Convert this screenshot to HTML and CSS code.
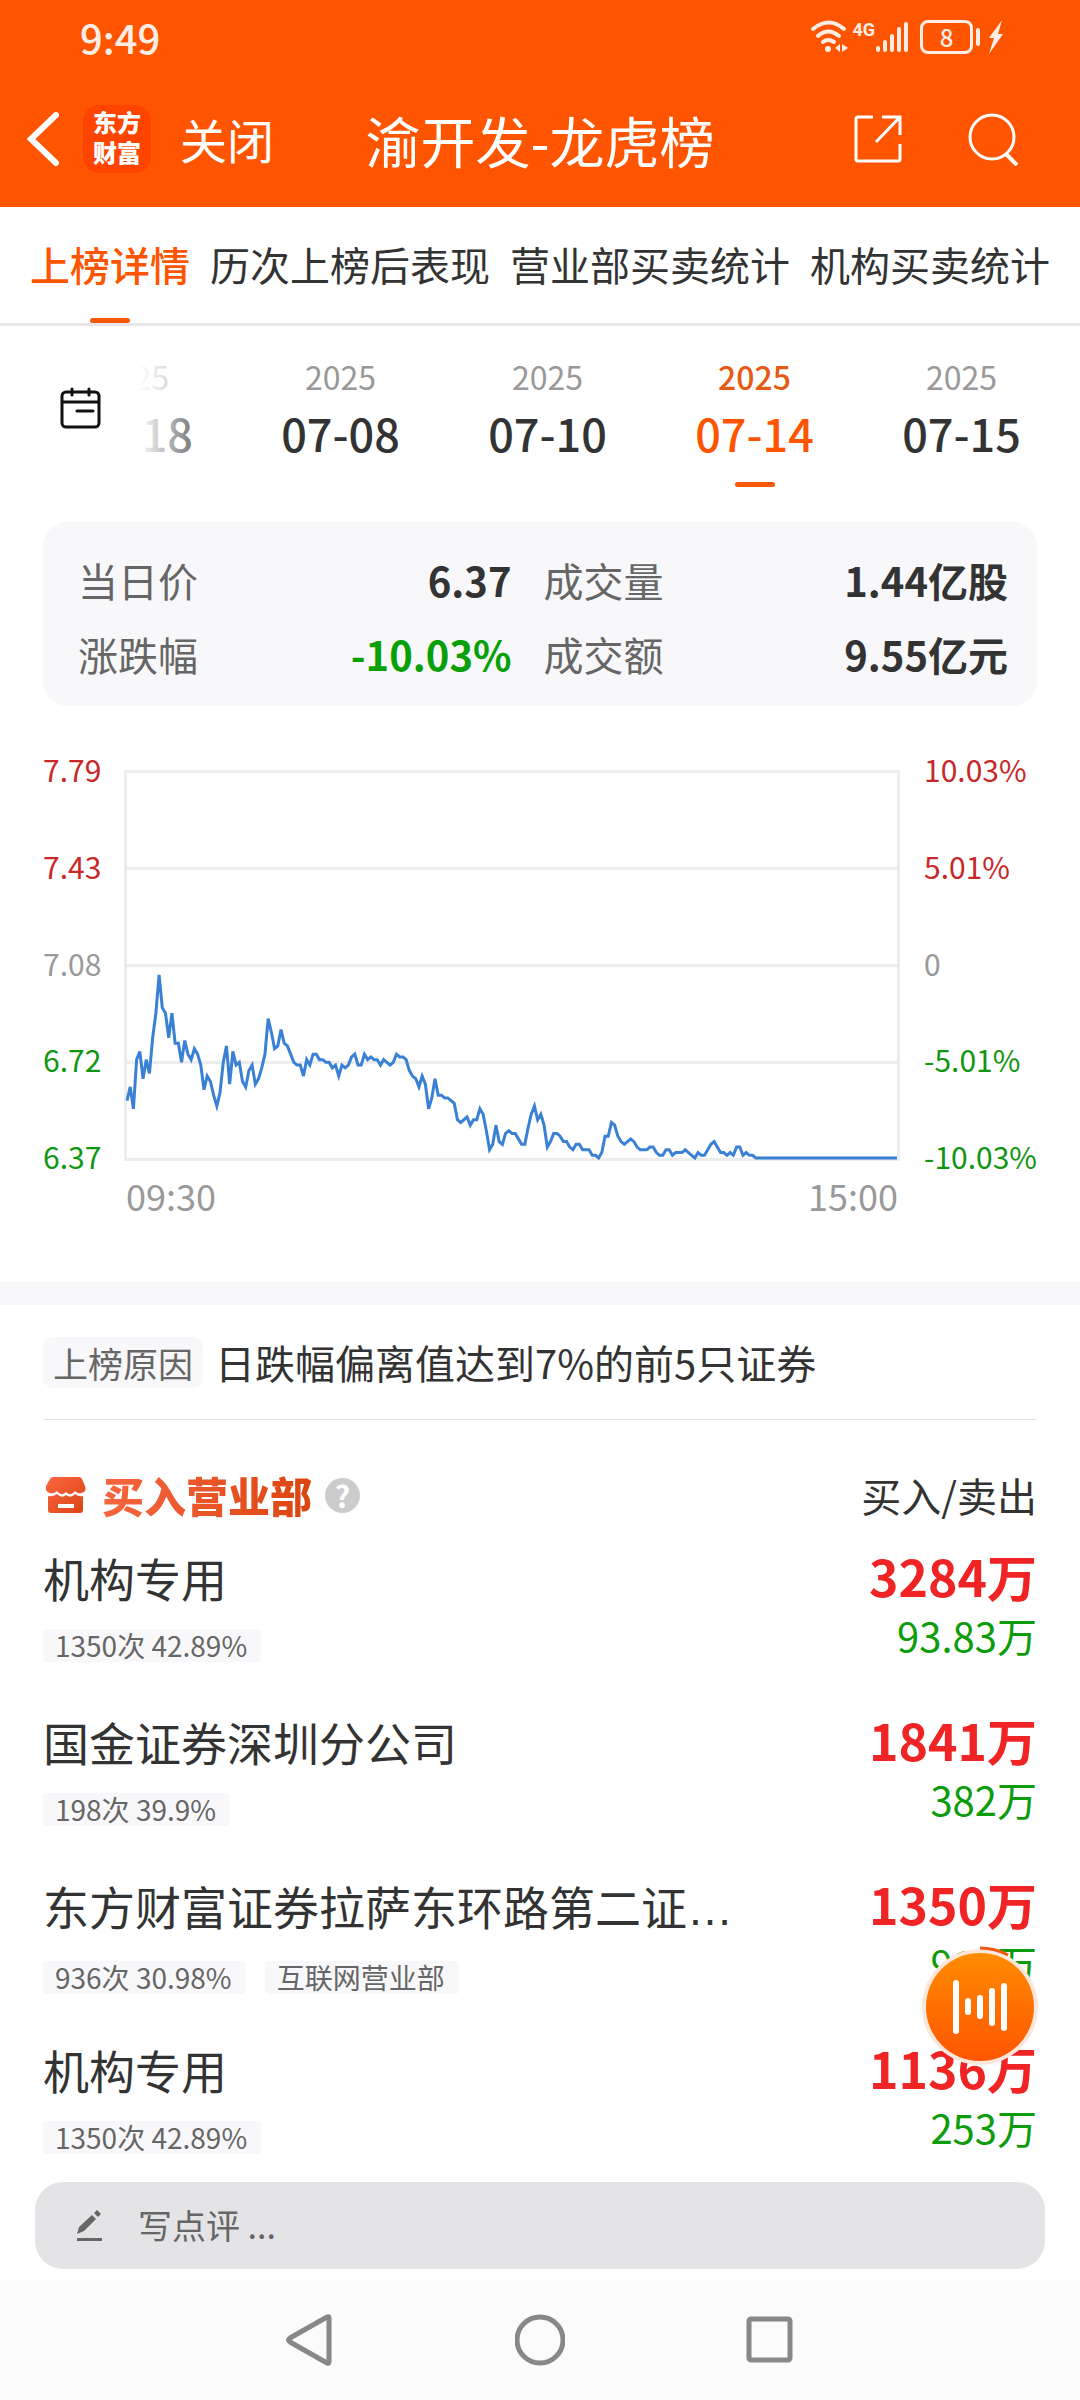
FILE: index.html
```html
<!DOCTYPE html>
<html lang="zh-CN">
<head>
<meta charset="utf-8">
<meta name="viewport" content="width=device-width, initial-scale=1">
<title>渝开发-龙虎榜</title>
<link rel="stylesheet" href="styles.css">
</head>
<body>
<div class="app">
  <header class="top">
    <div class="status">
      <time class="status-time">9:49</time>
      <div class="status-icons">
        <svg width="40" height="34" viewBox="0 0 40 34" fill="none" stroke="currentColor" stroke-width="4" stroke-linecap="round" aria-hidden="true">
          <path d="M3 9Q19 -4 34 9"/><path d="M8 16Q18 7 29 16"/><path d="M13 22Q18 18 24 22"/>
          <circle cx="18" cy="29" r="3" fill="currentColor" stroke="none"/>
          <path d="M30 24v8l-5-4zM32 24v8l6-4z" fill="currentColor" stroke="none"/>
        </svg>
        <span class="net">4G</span>
        <svg width="34" height="34" viewBox="0 0 34 34" fill="none" stroke="currentColor" stroke-width="4" stroke-linecap="round" aria-hidden="true">
          <path d="M3 28v2M10 22v8M17 16v14M24 9v21M31 4v26"/>
        </svg>
        <span class="battery">8</span>
        <svg width="16" height="34" viewBox="0 0 16 34" fill="currentColor" aria-hidden="true"><path d="M14 0L1 18h5L1 34 15 14H10z"/></svg>
      </div>
    </div>
    <div class="titlebar">
      <button class="icon-btn" aria-label="返回">
        <svg width="34" height="56" viewBox="0 0 34 56" fill="none" stroke="currentColor" stroke-width="6" stroke-linecap="round"><path d="M31 4L6 28l25 24"/></svg>
      </button>
      <span class="logo">东方<br>财富</span>
      <button class="close">关闭</button>
      <h1 class="title">渝开发-龙虎榜</h1>
      <button class="icon-btn share" aria-label="分享">
        <svg width="48" height="48" viewBox="0 0 48 48" fill="none" stroke="currentColor" stroke-width="3"><path d="M19 2H4Q2 2 2 4V44Q2 46 4 46H44Q46 46 46 44V29M28 2H46V20M45 3L22 27"/></svg>
      </button>
      <button class="icon-btn search" aria-label="搜索">
        <svg width="52" height="54" viewBox="0 0 52 54" fill="none" stroke="currentColor" stroke-width="3"><circle cx="24" cy="25" r="22"/><path d="M38 42L49 53" stroke-width="4"/></svg>
      </button>
    </div>
  </header>

  <nav class="tabs">
    <a class="tab active" href="#detail">上榜详情</a>
    <a class="tab" href="#history">历次上榜后表现</a>
    <a class="tab" href="#branch">营业部买卖统计</a>
    <a class="tab" href="#org">机构买卖统计</a>
  </nav>

  <main>
    <section class="dates">
      <button class="calendar" aria-label="选择日期">
        <svg width="42" height="42" viewBox="0 0 42 42" fill="none" stroke="currentColor" stroke-width="3" stroke-linecap="round"><rect x="2" y="5" width="37" height="35" rx="4"/><path d="M3 15H38M12 2V8M29 2V8M17 24H33"/></svg>
      </button>
      <div class="date-list">
        <button class="date"><small>2025</small>06-18</button>
        <button class="date"><small>2025</small>07-08</button>
        <button class="date"><small>2025</small>07-10</button>
        <button class="date active"><small>2025</small>07-14</button>
        <button class="date"><small>2025</small>07-15</button>
      </div>
    </section>

    <dl class="summary">
      <div><dt>当日价</dt><dd>6.37</dd></div>
      <div><dt>成交量</dt><dd>1.44亿股</dd></div>
      <div><dt>涨跌幅</dt><dd class="down">-10.03%</dd></div>
      <div><dt>成交额</dt><dd>9.55亿元</dd></div>
    </dl>

    <section class="chart">
      <div class="axis">
        <span class="rise">7.79</span><span class="rise">7.43</span><span class="flat">7.08</span><span class="fall">6.72</span><span class="fall">6.37</span>
      </div>
      <div class="plot">
        <i></i><i></i><i></i><i></i>
        <svg class="line" viewBox="0 0 240 142" preserveAspectRatio="none"><polyline id="price-line" vector-effect="non-scaling-stroke"/></svg>
      </div>
      <div class="axis">
        <span class="rise">10.03%</span><span class="rise">5.01%</span><span class="flat">0</span><span class="fall">-5.01%</span><span class="fall">-10.03%</span>
      </div>
      <div class="hours"><span>09:30</span><span>15:00</span></div>
    </section>

    <section class="list">
      <p class="reason"><span class="reason-tag">上榜原因</span>日跌幅偏离值达到7%的前5只证券</p>
      <div class="list-head">
        <svg width="40" height="36" viewBox="0 0 40 36" aria-hidden="true">
          <defs><linearGradient id="shop" x1="0" y1="0" x2="1" y2="1"><stop offset="0" stop-color="#fa6640"/><stop offset="1" stop-color="#db4414"/></linearGradient></defs>
          <path fill="url(#shop)" d="M7 0H33Q35 0 36 2L39 9Q41 15 35 16Q32 17 29 14Q25 20 20 15Q15 20 11 14Q8 17 4 16Q-1 15 0 9L4 2Q5 0 7 0zM2 19Q7 20 11 17Q16 22 20 18Q25 22 29 17Q33 20 37 19V33Q37 36 34 36H5Q2 36 2 33z"/>
          <path d="M12 29H28" stroke="#fff" stroke-width="4"/>
        </svg>
        <h2>买入营业部</h2>
        <button class="help" aria-label="说明">?</button>
        <span class="list-cols">买入/卖出</span>
      </div>
      <ul class="rows">
        <li>
          <div class="who"><h3>机构专用</h3><p><span>1350次 42.89%</span></p></div>
          <div class="sum"><b>3284万</b><span>93.83万</span></div>
        </li>
        <li>
          <div class="who"><h3>国金证券深圳分公司</h3><p><span>198次 39.9%</span></p></div>
          <div class="sum"><b>1841万</b><span>382万</span></div>
        </li>
        <li>
          <div class="who"><h3>东方财富证券拉萨东环路第二证<span class="more">…</span></h3><p><span>936次 30.98%</span><span>互联网营业部</span></p></div>
          <div class="sum"><b>1350万</b><span>918万</span></div>
        </li>
        <li>
          <div class="who"><h3>机构专用</h3><p><span>1350次 42.89%</span></p></div>
          <div class="sum"><b>1136万</b><span>253万</span></div>
        </li>
      </ul>
    </section>
  </main>

  <label class="comment">
    <svg width="26" height="32" viewBox="0 0 26 32" fill="currentColor" aria-hidden="true"><path d="M0 24L2 17 15 5 19 9 7 21zM17 3L20 0 24 4 21 7zM0 28H25V31H0z"/></svg>
    <input type="text" placeholder="写点评 ..." aria-label="写点评">
  </label>

  <nav class="system">
    <button aria-label="返回"><svg width="50" height="54" viewBox="0 0 50 54"><path d="M44 5V49Q44 51 42 50L5 29Q2 27 5 25L42 4Q44 3 44 5z"/></svg></button>
    <button aria-label="主页"><svg width="50" height="54" viewBox="0 0 50 54"><circle cx="25" cy="27" r="23"/></svg></button>
    <button aria-label="最近任务"><svg width="50" height="54" viewBox="0 0 50 54"><rect x="4" y="6" width="41" height="41" rx="2"/></svg></button>
  </nav>

  <button class="player" aria-label="播放">
    <svg width="124" height="124" viewBox="0 0 124 124" fill="none">
      <defs><linearGradient id="disc" x1="0" y1="0" x2="0" y2="1"><stop offset="0" stop-color="#ff8c00"/><stop offset="1" stop-color="#ff5500"/></linearGradient></defs>
      <circle cx="62" cy="62" r="58" fill="#ffe6da"/>
      <circle cx="62" cy="62" r="54" fill="url(#disc)"/>
      <path d="M62 3A59 59 0 0 1 90 10" stroke="#ee5a14" stroke-width="3"/>
      <path d="M38 38V86M50 56V67M62 53V71M74 46V78M86 41V83" stroke="#fff" stroke-width="6" stroke-linecap="round"/>
    </svg>
  </button>
</div>
<script src="chart.js"></script>
</body>
</html>
```
FILE: styles.css
```css
* { box-sizing: border-box; }

body {
  margin: 0;
  background: #fff;
  color: #333;
  font-family: "Noto Sans CJK SC", sans-serif;
  font-size: 40px;
  line-height: 48px;
}

h1, h2, h3, p, dl, dd, ul { margin: 0; padding: 0; font-weight: 400; }
ul { list-style: none; }
button {
  margin: 0;
  padding: 0;
  border: 0;
  background: none;
  color: inherit;
  font: inherit;
}
a { color: inherit; text-decoration: none; }
svg { display: block; }

.app {
  position: relative;
  display: flex;
  flex-direction: column;
  min-height: 100vh;
}
main { flex: 1; }

/* Header */
.top { background: #ff5500; color: #fff; }
.status {
  display: flex;
  justify-content: space-between;
  align-items: center;
  height: 73px;
  padding: 0 76px 0 80px;
  color: #ffeee6;
}
.status-time { font-weight: 500; }
.status-icons { display: flex; align-items: center; }
.net {
  align-self: flex-start;
  margin-left: 2px;
  font: 700 18px/20px "Roboto", sans-serif;
}
.battery {
  position: relative;
  width: 53px;
  height: 34px;
  margin: 0 15px 0 11px;
  border: 3px solid currentColor;
  border-radius: 8px;
  font-size: 24px;
  font-weight: 500;
  line-height: 28px;
  text-align: center;
}
.battery::after {
  content: "";
  position: absolute;
  top: 5px;
  right: -10px;
  width: 4px;
  height: 18px;
  border-radius: 2px;
  background: currentColor;
}
.titlebar {
  display: flex;
  align-items: center;
  height: 134px;
  padding: 0 60px 2px 25px;
}
.logo {
  width: 68px;
  height: 68px;
  margin-left: 24px;
  padding-top: 2px;
  border-radius: 16px;
  background: #ff4400;
  font-size: 24px;
  font-weight: 900;
  line-height: 30px;
  text-align: center;
}
.close { margin-left: 29px; font-size: 47px; }
.title {
  flex: 1;
  padding-right: 48px;
  font-size: 55px;
  line-height: 64px;
  text-align: center;
}
.share { margin-right: 66px; }

/* Tabs */
.tabs {
  display: flex;
  justify-content: space-between;
  height: 119px;
  padding: 0 30px;
  border-bottom: 3px solid #e8e8e8;
  white-space: nowrap;
}
.tab { position: relative; line-height: 114px; }
.tab.active { color: #ff5500; font-weight: 500; }
.tab.active::after, .date.active::after {
  content: "";
  position: absolute;
  bottom: 0;
  left: 50%;
  width: 40px;
  height: 5px;
  margin-left: -20px;
  border-radius: 3px;
  background: #f95808;
}

/* Dates */
.dates { display: flex; height: 164px; }
.calendar {
  display: flex;
  align-items: center;
  width: 138px;
  padding-left: 60px;
  color: #111;
}
.date-list {
  position: relative;
  display: flex;
  flex: 1;
  justify-content: flex-end;
  padding-right: 15px;
  overflow: hidden;
}
.date-list::before {
  content: "";
  position: absolute;
  z-index: 1;
  inset: 0 auto 0 0;
  width: 84px;
  background: linear-gradient(90deg, #fff, rgba(255, 255, 255, 0));
}
.date {
  position: relative;
  flex: none;
  width: 207px;
  padding-bottom: 5px;
  font-size: 45px;
  font-weight: 500;
  line-height: 60px;
}
.date small {
  display: block;
  color: #999;
  font-size: 32px;
  font-weight: 400;
  line-height: 54px;
}
.date.active { color: #ff5500; }
.date.active small { color: #e65a14; font-weight: 500; }
.date.active::after { bottom: 3px; }

/* Summary */
.summary {
  display: grid;
  grid-template-columns: 14fr 15fr;
  column-gap: 32px;
  margin: 32px 43px 0;
  padding: 21px 29px 15px 35px;
  border-radius: 24px;
  background: #f8f8fa;
}
.summary div { display: flex; justify-content: space-between; line-height: 74px; }
.summary dt { color: #666; }
.summary dd { font-weight: 700; }
.summary .down { color: #08a008; }

/* Chart */
.chart {
  display: grid;
  grid-template-columns: 81px 1fr 137px;
  margin: 48px 43px 0;
}
.axis {
  display: flex;
  flex-direction: column;
  justify-content: space-between;
  font-size: 30px;
  line-height: 30px;
}
.axis:nth-child(3) { padding-left: 24px; }
.rise { color: #c82828; }
.flat { color: #999; }
.fall { color: #119611; }
.plot {
  position: relative;
  display: grid;
  grid-template-rows: repeat(4, 97px);
  margin: 16px 0 10px;
  border: 3px solid #ededed;
  border-top: 0;
}
.plot i { border-top: 3px solid #ededed; }
.line {
  position: absolute;
  inset: 0;
  width: 100%;
  height: 100%;
  overflow: visible;
  fill: none;
  stroke: #3a80d4;
  stroke-width: 3;
}
.hours {
  grid-column: 2;
  display: flex;
  justify-content: space-between;
  padding: 0 2px;
  color: #999;
  font-size: 36px;
}

/* Seats */
.list {
  margin-top: 63px;
  padding: 0 43px;
  border-top: 23px solid #f8f8fa;
}
.reason {
  display: flex;
  align-items: center;
  height: 115px;
  border-bottom: 1px solid #e2e2e4;
}
.reason-tag {
  margin-right: 12px;
  padding: 0 10px;
  border-radius: 10px;
  background: #f8f8fa;
  color: #666;
  font-size: 35px;
  line-height: 51px;
}
.list-head {
  display: flex;
  align-items: center;
  margin: 51px 0 28px;
  padding-left: 3px;
}
.list-head h2 {
  margin: 0 13px 0 16px;
  background: linear-gradient(90deg, #f8663f, #db4510);
  background-clip: text;
  color: transparent;
  font-size: 42px;
  font-weight: 900;
}
.help {
  width: 35px;
  height: 35px;
  border-radius: 50%;
  background: #ccc;
  color: #fff;
  font-size: 30px;
  font-weight: 700;
  line-height: 35px;
}
.list-cols { margin-left: auto; }
.rows li {
  display: flex;
  justify-content: space-between;
  height: 164px;
}
.rows li:last-child { height: 143px; }
.who h3 { font-size: 46px; line-height: 60px; }
.more { font-family: "Liberation Sans", sans-serif; }
.who p { display: flex; gap: 19px; margin-top: 22px; }
.who p span {
  padding: 0 14px 0 12px;
  border-radius: 4px;
  background: #f8f8fa;
  color: #666;
  font-size: 28px;
  line-height: 33px;
}
.sum { display: flex; flex-direction: column; text-align: right; }
.sum b { color: #f02424; font-size: 50px; line-height: 56px; }
.sum span { margin-top: 8px; color: #0c9c0c; }

/* Comment box and system keys */
.comment {
  display: flex;
  align-items: center;
  gap: 35px;
  margin: 0 35px 11px;
  padding: 0 42px;
  border-radius: 28px;
  background: #e4e4e6;
  color: #666;
}
.comment input {
  flex: 1;
  height: 87px;
  padding: 0 0 3px;
  border: 0;
  outline: 0;
  background: none;
  color: #333;
  font: inherit;
  font-size: 34px;
}
.comment input::placeholder { color: #666; opacity: 1; }
.system {
  display: flex;
  justify-content: center;
  align-items: center;
  gap: 180px;
  height: 120px;
  background: #fbfbfb;
}
.system svg { fill: none; stroke: #888; stroke-width: 5; }

.player {
  position: absolute;
  right: 38px;
  bottom: 331px;
}
```
FILE: chart.js
```js
// Price for each minute, in cents above the day's limit-down price of 6.37.
const cents = [
  21, 26, 18, 36, 39, 29, 36, 31, 44, 53, 67, 55, 53, 44, 53, 42, 42, 35, 43, 38,
  36, 40, 38, 34, 25, 30, 28, 23, 19, 24, 35, 41, 27, 39, 34, 35, 28, 26, 32, 34,
  27, 29, 33, 38, 51, 46, 40, 41, 47, 42, 41, 38, 35, 34, 34, 30, 36, 34, 38, 38,
  36, 36, 35, 35, 33, 34, 30, 34, 33, 34, 37, 38, 34, 34, 38, 36, 37, 36, 36, 34,
  36, 35, 34, 35, 38, 37, 37, 36, 32, 30, 29, 26, 30, 27, 18, 22, 29, 23, 23, 22,
  22, 21, 20, 14, 13, 14, 15, 12, 14, 14, 18, 16, 10, 3, 5, 12, 6, 5, 9, 10,
  9, 9, 7, 5, 5, 11, 16, 19, 14, 16, 12, 4, 6, 9, 9, 8, 6, 6, 4, 3,
  5, 5, 3, 3, 3, 1, 1, 0, 2, 8, 8, 13, 12, 8, 6, 5, 6, 7, 6, 4,
  3, 3, 3, 4, 4, 2, 1, 1, 3, 3, 1, 2, 2, 2, 3, 2, 1, 0, 2, 1,
  1, 3, 5, 6, 4, 2, 2, 1, 2, 1, 4, 4, 1, 2, 1, 1, 0
];
const range = 142;
const minutes = 240;

const points = cents.map((c, i) => `${i},${range - c}`);
points.push(`${minutes},${range}`);
document.getElementById("price-line").setAttribute("points", points.join(" "));
```
